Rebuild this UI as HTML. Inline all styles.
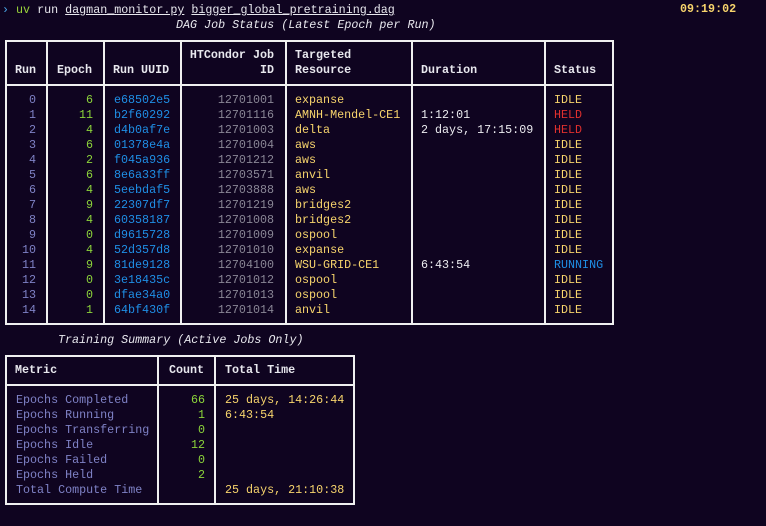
<!DOCTYPE html>
<html><head><meta charset="utf-8"><style>
*{margin:0;padding:0;box-sizing:border-box}
body{width:766px;height:526px;background:#0f0420;overflow:hidden;position:relative;font-family:"Liberation Mono",monospace;font-size:11.7px;color:#e8e8ee}
.t{position:absolute;white-space:pre;line-height:15px;height:15px}
.b{font-weight:bold}
.box{position:absolute;border:2px solid #f0f0f0}
.v{position:absolute;width:2px;background:#f0f0f0}
.h{position:absolute;height:2px;background:#f0f0f0}
.r{text-align:right}
.lav{color:#7f82c6}.grn{color:#8cd43a}.blu{color:#1f8fe6}.gry{color:#8a8796}.yel{color:#f7d46c}.red{color:#e0302e}.wh{color:#ececf0}
</style></head><body>
<div class="t" style="left:2px;top:3px"><span style="color:#4aa8e8">›</span> <span style="color:#9ad43a">uv</span> run <u>dagman_monitor.py</u> <u>bigger_global_pretraining.dag</u></div>
<div class="t b yel" style="left:680px;top:2px">09:19:02</div>
<div class="t" style="left:176px;top:18px;font-style:italic">DAG Job Status (Latest Epoch per Run)</div>

<div class="box" style="left:5px;top:40px;width:609px;height:285px"></div>
<div class="h" style="left:5px;top:84px;width:609px"></div>
<div class="v" style="left:46px;top:40px;height:285px"></div>
<div class="v" style="left:103px;top:40px;height:285px"></div>
<div class="v" style="left:180px;top:40px;height:285px"></div>
<div class="v" style="left:285px;top:40px;height:285px"></div>
<div class="v" style="left:411px;top:40px;height:285px"></div>
<div class="v" style="left:544px;top:40px;height:285px"></div>

<div class="t b" style="left:15px;top:63px">Run</div>
<div class="t b" style="left:57px;top:63px">Epoch</div>
<div class="t b" style="left:113px;top:63px">Run UUID</div>
<div class="t b r" style="left:185px;width:89px;top:48px;height:30px">HTCondor Job
ID</div>
<div class="t b" style="left:295px;top:48px;height:30px">Targeted
Resource</div>
<div class="t b" style="left:421px;top:63px">Duration</div>
<div class="t b" style="left:554px;top:63px">Status</div>

<div class="t lav r" style="left:10px;width:26px;top:93px;height:230px">0
1
2
3
4
5
6
7
8
9
10
11
12
13
14</div>
<div class="t grn r" style="left:50px;width:43px;top:93px;height:230px">6
11
4
6
2
6
4
9
4
0
4
9
0
0
1</div>
<div class="t blu" style="left:114px;top:93px;height:230px">e68502e5
b2f60292
d4b0af7e
01378e4a
f045a936
8e6a33ff
5eebdaf5
22307df7
60358187
d9615728
52d357d8
81de9128
3e18435c
dfae34a0
64bf430f</div>
<div class="t gry r" style="left:185px;width:89px;top:93px;height:230px">12701001
12701116
12701003
12701004
12701212
12703571
12703888
12701219
12701008
12701009
12701010
12704100
12701012
12701013
12701014</div>
<div class="t yel" style="left:295px;top:93px;height:230px">expanse
AMNH-Mendel-CE1
delta
aws
aws
anvil
aws
bridges2
bridges2
ospool
expanse
WSU-GRID-CE1
ospool
ospool
anvil</div>
<div class="t wh" style="left:421px;top:108px;height:30px">1:12:01
2 days, 17:15:09</div>
<div class="t wh" style="left:421px;top:258px">6:43:54</div>
<div class="t yel" style="left:554px;top:93px;height:230px">IDLE
<span class="red">HELD</span>
<span class="red">HELD</span>
IDLE
IDLE
IDLE
IDLE
IDLE
IDLE
IDLE
IDLE
<span class="blu">RUNNING</span>
IDLE
IDLE
IDLE</div>

<div class="t" style="left:58px;top:333px;font-style:italic">Training Summary (Active Jobs Only)</div>
<div class="box" style="left:5px;top:355px;width:350px;height:150px"></div>
<div class="h" style="left:5px;top:384px;width:350px"></div>
<div class="v" style="left:157px;top:355px;height:150px"></div>
<div class="v" style="left:214px;top:355px;height:150px"></div>
<div class="t b" style="left:15px;top:363px">Metric</div>
<div class="t b" style="left:169px;top:363px">Count</div>
<div class="t b" style="left:225px;top:363px">Total Time</div>
<div class="t lav" style="left:16px;top:393px;height:110px">Epochs Completed
Epochs Running
Epochs Transferring
Epochs Idle
Epochs Failed
Epochs Held
Total Compute Time</div>
<div class="t grn r" style="left:160px;width:45px;top:393px;height:110px">66
1
0
12
0
2</div>
<div class="t yel" style="left:225px;top:393px;height:30px">25 days, 14:26:44
6:43:54</div>
<div class="t yel" style="left:225px;top:483px">25 days, 21:10:38</div>
</body></html>
